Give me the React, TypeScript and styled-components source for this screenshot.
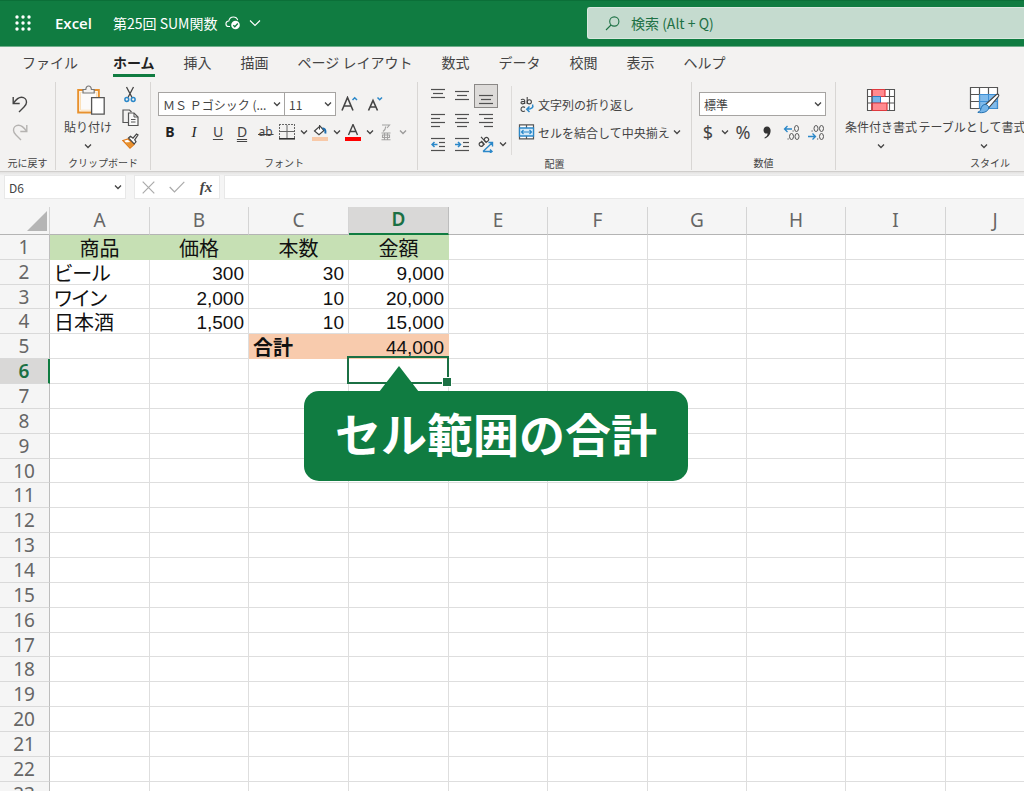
import React from 'react';
import styled, { createGlobalStyle, css } from 'styled-components';

const UI = `"Noto Sans CJK JP", "Noto Sans", sans-serif`;
const GREEN = '#107c41';

const GlobalStyle = createGlobalStyle`
  * { box-sizing: border-box; }
  body { margin: 0; font-family: ${UI}; color: #444; background: #fff; }
  button, input, select { font-family: inherit; color: inherit; margin: 0; }
  svg { display: block; flex: none; }
`;

const Page = styled.div`
  display: flex;
  flex-direction: column;
  height: 100vh;
  overflow: hidden;
`;

/* ---------- title bar ---------- */

const TitleBar = styled.header`
  display: grid;
  grid-template-columns: 587px 1fr;
  align-items: center;
  height: 47px;
  flex: none;
  padding-bottom: 1px;
  background: ${GREEN};
  border-top: 1px solid #0b6f38;
  border-bottom: 1px solid #6fae8b;
  color: #fff;
`;

const TitleLeft = styled.div`
  display: flex;
  align-items: center;
  padding-left: 12px;
`;

const PlainButton = styled.button`
  display: flex;
  align-items: center;
  justify-content: center;
  padding: 0;
  border: 0;
  background: none;
`;

const WaffleButton = styled(PlainButton)`
  width: 22px;
  height: 24px;
`;

const AppName = styled.a`
  margin-left: 21px;
  width: 58px;
  font: 600 15px/24px "Open Sans", sans-serif;
  color: #fff;
  text-decoration: none;
`;

const FileButton = styled(PlainButton)`
  gap: 8px;
  font-size: 14px;
  line-height: 24px;
`;

const SearchBox = styled.label`
  display: flex;
  align-items: center;
  gap: 11px;
  height: 32px;
  padding-left: 17px;
  background: #c5dbcf;
  border: 1px solid #d9e8df;
  border-right: 0;
  border-radius: 3px 0 0 3px;
  color: #1e7145;
`;

const SearchInput = styled.input`
  flex: 1;
  min-width: 0;
  padding: 0;
  border: 0;
  outline: 0;
  background: none;
  font-size: 14px;
  &::placeholder { color: #1e7145; opacity: 1; }
`;

/* ---------- ribbon ---------- */

const Tabs = styled.nav`
  display: flex;
  gap: 29px;
  height: 34px;
  flex: none;
  padding: 3px 0 0 22px;
  background: #f3f2f1;
`;

const Tab = styled.a<{ $active?: boolean; $wide?: boolean }>`
  height: 27px;
  font-size: 14px;
  line-height: 24px;
  color: #444;
  white-space: nowrap;
  text-decoration: none;
  ${p => p.$wide && css`margin-right: 6px;`}
  ${p => p.$active && css`
    font-weight: 700;
    color: #222;
    border-bottom: 3px solid ${GREEN};
  `}
`;

const Ribbon = styled.section`
  display: flex;
  height: 90px;
  flex: none;
  padding: 1px 0;
  background: #f3f2f1;
  overflow: hidden;
`;

const Group = styled.div<{ $width: number }>`
  display: flex;
  flex-direction: column;
  flex: none;
  width: ${p => p.$width}px;
  border-right: 1px solid #d8d6d4;
`;

const GroupBody = styled.div<{ $left?: number }>`
  display: flex;
  height: 74px;
  padding-left: ${p => p.$left ?? 8}px;
`;

const GroupLabel = styled.div`
  font-size: 10px;
  line-height: 15px;
  text-align: center;
  color: #444;
`;

const Rows = styled.div`
  display: flex;
  flex-direction: column;
  padding-top: 8px;
`;

const Row = styled.div`
  display: flex;
  align-items: center;
  height: 28px;
`;

const Tool = styled(PlainButton)<{ $width?: number; $on?: boolean }>`
  width: ${p => p.$width ?? 24}px;
  height: 24px;
  font: 400 14px/20px "Noto Sans", sans-serif;
  ${p => p.$on && css`
    background: #dddbd9;
    border: 1px solid #8a8886;
  `}
`;

const Glyph = styled.span<{ $kind: 'bold' | 'italic' | 'under' | 'double' | 'strike' }>`
  font: 400 14px/18px "Noto Sans", sans-serif;
  ${p => p.$kind === 'bold' && css`font-weight: 700; color: #222;`}
  ${p => p.$kind === 'italic' && css`font: italic 400 15px/18px "Liberation Serif", serif; color: #222;`}
  ${p => p.$kind === 'under' && css`text-decoration: underline; text-underline-offset: 2px;`}
  ${p => p.$kind === 'double' && css`text-decoration: underline double; text-underline-offset: 2px;`}
  ${p => p.$kind === 'strike' && css`
    padding-right: 1px;
    font-size: 12px;
    background: linear-gradient(#444, #444) center 11px / 100% 1px no-repeat;
  `}
`;

const Split = styled(PlainButton)<{ $faded?: boolean }>`
  display: grid;
  grid-template-columns: 18px 15px;
  justify-items: center;
  height: 24px;
  opacity: ${p => (p.$faded ? 0.5 : 1)};
`;

const Symbol = styled.span`
  font: 400 18px/22px "Noto Sans", sans-serif;
`;

const BigButton = styled(PlainButton)<{ $width: number }>`
  flex-direction: column;
  justify-content: flex-start;
  flex: none;
  width: ${p => p.$width}px;
  font-size: 12px;
  line-height: 20px;
  white-space: nowrap;
`;

const BigIcon = styled.span`
  display: flex;
  align-items: center;
  height: 35px;
`;

const ChevronSlot = styled.span`
  display: flex;
  align-items: center;
  height: 18px;
`;

const SmallStack = styled.div`
  display: flex;
  flex-direction: column;
  padding: 1px 0 0 4px;
`;

const SmallTool = styled(PlainButton)`
  width: 24px;
  height: 23px;
`;

const SelectWrap = styled.label<{ $width: number }>`
  position: relative;
  display: flex;
  align-items: center;
  width: ${p => p.$width}px;
  height: 24px;
  background: #fff;
  border: 1px solid #a6a4a2;
  & + & { border-left: 0; }
  & > svg { position: absolute; right: 3px; pointer-events: none; }
`;

const Select = styled.select`
  appearance: none;
  width: 100%;
  height: 100%;
  padding: 0 0 0 4px;
  border: 0;
  outline: 0;
  background: none;
  font-size: 12px;
`;

const AlignGrid = styled.div`
  display: grid;
  grid-template-columns: 24px 24px 24px 13px;
  grid-auto-rows: 24px;
  padding-top: 2px;
`;

const Orientation = styled(PlainButton)`
  grid-column: span 2;
  gap: 3px;
  justify-content: flex-start;
  padding-left: 3px;
`;

const Spacer = styled.span``;

const WrapTools = styled(Rows)`
  position: relative;
  padding-left: 7px;
  &::before {
    content: "";
    position: absolute;
    left: 0;
    top: 4px;
    bottom: 1px;
    border-left: 1px solid #dddbd9;
  }
`;

const LineTool = styled(PlainButton)`
  gap: 3px;
  height: 28px;
  justify-content: flex-start;
  font-size: 12px;
  white-space: nowrap;
`;

/* ---------- formula bar ---------- */

const FormulaBar = styled.div`
  display: flex;
  height: 36px;
  flex: none;
  padding: 3px 0 8px 4px;
  border-top: 1px solid #d0cecc;
  background: linear-gradient(#e2e1e0, #f5f5f5 4px);
`;

const NameBox = styled.label`
  position: relative;
  display: flex;
  align-items: center;
  width: 122px;
  margin-right: 8px;
  background: #fff;
  border: 1px solid #e8e8e8;
  & > svg { position: absolute; right: 3px; }
`;

const NameInput = styled.input`
  width: 100%;
  padding: 0 0 0 4px;
  border: 0;
  outline: 0;
  background: none;
  font-size: 12px;
`;

const FormulaTools = styled.div`
  display: flex;
  align-items: center;
  width: 86px;
  margin-right: 4px;
  background: #fff;
  border: 1px solid #e8e8e8;
`;

const Fx = styled.span`
  font: italic 700 15px/20px "Liberation Serif", serif;
`;

const FormulaInput = styled.input`
  flex: 1;
  min-width: 0;
  padding: 0 6px;
  border: 1px solid #e8e8e8;
  border-right: 0;
  outline: 0;
  background: #fff;
  font-size: 12px;
`;

/* ---------- sheet ---------- */

const Sheet = styled.main`
  position: relative;
  flex: 1;
  min-height: 0;
  overflow: hidden;
  background: linear-gradient(#f5f5f5 28px, #fff 28px);
`;

const Grid = styled.table`
  table-layout: fixed;
  width: 1045px;
  border-collapse: separate;
  border-spacing: 0;
`;

const SheetRow = styled.tr<{ $height: number }>`
  height: ${p => p.$height}px;
`;

const ColHead = styled.th<{ $active?: boolean }>`
  height: 28px;
  padding: 0 0 2px;
  font: 400 19px/24px "Noto Sans", sans-serif;
  color: #666;
  background: #f5f5f5;
  border-right: 1px solid #d4d4d4;
  border-bottom: 1px solid #b4b4b4;
  ${p => p.$active && css`
    font-weight: 600;
    color: #1b7044;
    background: #d9d8d7;
    border-right-color: #bdbdbd;
    border-bottom: 2px solid ${GREEN};
  `}
`;

const Corner = styled.td`
  padding: 0 2px 3px 0;
  background: #f5f5f5;
  border-right: 1px solid #d4d4d4;
  border-bottom: 1px solid #b4b4b4;
  vertical-align: bottom;
  & > svg { margin-left: auto; }
`;

const RowHead = styled.th<{ $active?: boolean }>`
  padding: 0 1px 0 0;
  font: 400 19px/20px "Noto Sans", sans-serif;
  color: #666;
  background: #f5f5f5;
  border-right: 1px solid #bdbdbd;
  border-bottom: 1px solid #d9d9d9;
  ${p => p.$active && css`
    padding: 0;
    font-weight: 600;
    color: #1b7044;
    background: #d9d8d7;
    border-right: 2px solid ${GREEN};
  `}
`;

type Align = 'left' | 'center' | 'right';

const Cell = styled.td<{ $align?: Align; $fill?: string; $bold?: boolean }>`
  position: relative;
  padding: 4px 4px 0 4px;
  font: 400 19px/18px "Liberation Sans", "Noto Sans CJK JP", sans-serif;
  font-size: ${p => (p.$align === 'right' ? 19 : 20)}px;
  font-weight: ${p => (p.$bold ? 700 : 400)};
  color: #111;
  text-align: ${p => p.$align ?? 'left'};
  font-feature-settings: ${p => (p.$align ? 'normal' : '"palt"')};
  white-space: nowrap;
  background: ${p => p.$fill ?? '#fff'};
  border-right: 1px solid ${p => p.$fill ?? '#dedede'};
  border-bottom: 1px solid ${p => p.$fill ?? '#dedede'};
`;

const Selection = styled.div`
  position: absolute;
  z-index: 1;
  inset: -3px -1px -1px -2px;
  border: 2px solid #1b7044;
  &::after {
    content: "";
    position: absolute;
    right: -5px;
    bottom: -5px;
    width: 8px;
    height: 8px;
    background: #1b7044;
    border: 1px solid #fff;
  }
`;

const Callout = styled.div`
  position: absolute;
  z-index: 2;
  top: 184px;
  left: 304px;
  padding: 0 31px 8px;
  border-radius: 15px;
  background: ${GREEN};
  color: #fff;
  font-size: 46px;
  font-weight: 700;
  line-height: 82px;
  white-space: nowrap;
  &::before {
    content: "";
    position: absolute;
    left: 75px;
    top: -25px;
    border: 20px solid transparent;
    border-top: 0;
    border-bottom: 26px solid ${GREEN};
  }
`;

/* ---------- icons ---------- */

const Chevron = ({ size = 6, color = '#444', width = 1.3 }: { size?: number; color?: string; width?: number }) => (
  <svg width={size + 2} height={size} viewBox={`0 0 ${size + 2} ${size}`} fill="none" stroke={color} strokeWidth={width}>
    <path d={`M1 ${size / 4}L${size / 2 + 1} ${size * 0.75}L${size + 1} ${size / 4}`} />
  </svg>
);

const WaffleIcon = () => (
  <svg width="18" height="18" viewBox="0 0 18 18" fill="#fff">
    {[3, 9, 15].map(y => [3, 9, 15].map(x => <circle key={`${x}-${y}`} cx={x} cy={y} r="1.7" />))}
  </svg>
);

const CloudIcon = () => (
  <svg width="16" height="14" viewBox="0 0 16 14" fill="none" stroke="#fff" strokeWidth="1.1">
    <path d="M5 10.5H3.6A2.7 2.7 0 0 1 3.8 5C4.300 2.600 6.200 1 8.400 1s3.700 1.200 4.300 3.100" />
    <circle cx="10.500" cy="9" r="4.300" fill="#fff" stroke="none" />
    <path d="M8.300 9.300l1.500 1.500 3-3.300" stroke={GREEN} strokeWidth="1.300" />
  </svg>
);

const SearchIcon = () => (
  <svg width="15" height="15" viewBox="0 0 15 15" fill="none" stroke="#1e7145" strokeWidth="1.1">
    <circle cx="9.300" cy="5.500" r="4.600" />
    <path d="M6 9L1 14" />
  </svg>
);

const UndoIcon = ({ flip }: { flip?: boolean }) => (
  <svg width="16" height="18" viewBox="0 0 16 18" fill="none" stroke={flip ? '#b5b3b1' : '#444'} strokeWidth="1.4">
    <g transform={flip ? 'matrix(-1 0 0 1 16 0)' : undefined}>
      <path d="M1.200 2v6.500h6.500" />
      <path d="M1.500 8.200C4 4.500 6.500 2.300 9.500 2.300c3 0 5 2.200 5 4.900 0 2-1 3.300-2.500 4.800L7 17" />
    </g>
  </svg>
);

const PasteIcon = () => (
  <svg width="34" height="30" viewBox="-6 0 34 30" fill="none">
    <path d="M1.200 5h20.600v22.500H1.200z" fill="#fff" stroke="#e8912d" strokeWidth="2" />
    <path d="M3.500 7.200h16v18h-16z" fill="#fbfaf9" stroke="#fbe0b8" strokeWidth="1" />
    <path d="M6 8V4.500h2.800C9 2.200 10 1 11.600 1s2.600 1.200 2.800 3.500h2.800V8z" fill="#f3f2f1" stroke="#777" strokeWidth="1.200" />
    <path d="M14.600 12.600h12.600v16.600H14.600z" fill="#fff" stroke="#555" strokeWidth="1.300" />
  </svg>
);

const CutIcon = () => (
  <svg width="12" height="17" viewBox="0 0 12 17" fill="none">
    <path d="M2.500 1l5.800 11M9.500 1L3.700 12" stroke="#444" strokeWidth="1.300" />
    <circle cx="2.800" cy="13.500" r="1.900" stroke="#2b88c9" strokeWidth="1.500" />
    <circle cx="9.200" cy="13.500" r="1.900" stroke="#2b88c9" strokeWidth="1.500" />
  </svg>
);

const CopyIcon = () => (
  <svg width="17" height="17" viewBox="0 0 17 17" fill="none" stroke="#555" strokeWidth="1.200">
    <path d="M6 13.500H1V1h6.500l2 2" />
    <path d="M6.500 4h5.500l4 4v8.500H6.500z" fill="#f8f8f8" />
    <path d="M12 4v4h4M9 10.500h4.500M9 13h4.500" strokeWidth="1" />
  </svg>
);

const PainterIcon = () => (
  <svg width="17" height="16" viewBox="0 0 17 16">
    <path d="M1 7.500l5-1.500 6 5.500-4 3.500z" fill="#fff" stroke="#e07b1a" strokeWidth="1.300" />
    <path d="M3 9.500l6-.5 2.500 2.500-3.500 3z" fill="#e8912d" />
    <path d="M6.500 5l2-1.800 2.500 2L14.500 1l1.500 1-3.300 4.800 1.300 2-1.800 2z" fill="#fff" stroke="#444" strokeWidth="1.200" />
  </svg>
);

const FontSizeIcon = ({ up }: { up?: boolean }) => (
  <svg width="18" height="17" viewBox="0 0 18 17" fill="none">
    {up
      ? <path d="M1 14.500L6.500 1.500 12 14.500M3 10h7" stroke="#444" strokeWidth="1.600" />
      : <path d="M1.500 14.500L6 4.500 10.500 14.500M3 11h6" stroke="#444" strokeWidth="1.600" />}
    <path d={up ? 'M11.500 4L13.700 1.800 16 4' : 'M10.500 1.500l2.200 2.200L15 1.500'} stroke="#2b88c9" strokeWidth="1.500" />
  </svg>
);

const BorderIcon = () => (
  <svg width="16" height="16" viewBox="0 0 16 16" fill="none" stroke="#666">
    <path d="M.5 0v14M15.500 0v14M0 .5h16" strokeWidth="1" strokeDasharray="2 1" />
    <path d="M8 1v13M1 7.500h14" strokeWidth="1" />
    <path d="M0 14.800h16" stroke="#333" strokeWidth="1.600" />
  </svg>
);

const FillIcon = () => (
  <svg width="16" height="17" viewBox="0 0 16 17" fill="none">
    <path d="M2.500 7L8 2l4 4.500-5 4.300z" fill="#fff" stroke="#444" strokeWidth="1.200" />
    <path d="M7.500 1v4.500" stroke="#444" />
    <path d="M10.500 4.500C12.500 4 14 6 13.300 9.500" stroke="#1f6fb0" strokeWidth="2" />
    <path d="M0 13h16v4H0z" fill="#f8c9a8" />
  </svg>
);

const FontColorIcon = () => (
  <svg width="16" height="17" viewBox="0 0 16 17" fill="none">
    <path d="M3.500 11L8 .5l4.500 10.500M5.200 7.500h5.600" stroke="#444" strokeWidth="1.400" />
    <path d="M0 13h16v4H0z" fill="#f00" />
  </svg>
);

const PhoneticIcon = () => (
  <svg width="10" height="17" viewBox="0 0 10 17" fill="none" stroke="#555" strokeWidth="1.100">
    <path d="M1 1h7.500L6 4M4.700 2.500c0 2.500-.5 3.500-2.700 5M.5 9h9M.5 15.800h9M3.500 9v6.500M6.500 9v6.500M1.500 11h7v2.500h-7z" />
  </svg>
);

const LINES: Record<string, [number, number, number][]> = {
  top: [[0, 14, 1], [2, 12, 5], [0, 14, 9]],
  middle: [[0, 14, 3], [2, 12, 7], [0, 14, 11]],
  bottom: [[0, 14, 7], [2, 12, 11], [0, 14, 15]],
  left: [[0, 14, 2], [0, 9, 6], [0, 14, 10], [0, 9, 14]],
  center: [[0, 14, 2], [2, 12, 6], [0, 14, 10], [2, 12, 14]],
  right: [[0, 14, 2], [5, 14, 6], [0, 14, 10], [5, 14, 14]],
  outdent: [[0, 14, 2], [8, 14, 6], [8, 14, 10], [0, 14, 14]],
  indent: [[0, 14, 2], [8, 14, 6], [8, 14, 10], [0, 14, 14]],
};

const LinesIcon = ({ kind }: { kind: string }) => (
  <svg width="14" height="17" viewBox="0 0 14 17" fill="none">
    {LINES[kind].map(([a, b, y]) => <path key={y} d={`M${a} ${y + 0.5}H${b}`} stroke="#505050" strokeWidth="1.200" />)}
    {kind === 'outdent' && <path d="M6.500 8.500H1M3.500 6L1 8.500 3.500 11" stroke="#2b88c9" strokeWidth="1.500" />}
    {kind === 'indent' && <path d="M0 8.500h5.500M3 6l2.500 2.500L3 11" stroke="#2b88c9" strokeWidth="1.500" />}
  </svg>
);

const OrientationIcon = () => (
  <svg width="19" height="17" viewBox="0 0 19 17" fill="none">
    <g stroke="#444" strokeWidth="1.200" transform="rotate(-42 6 6)">
      <circle cx="3.200" cy="6.500" r="2.100" />
      <path d="M5.500 4v5M8 .8V9" />
      <circle cx="10.200" cy="6.500" r="2.100" />
    </g>
    <path d="M6 15.500L15.500 6.500M11.500 6.500h4v4M6 15.500h9M13 13.500l2 2-2 1.500" stroke="#2b88c9" strokeWidth="1.400" />
  </svg>
);

const WrapIcon = () => (
  <svg width="17" height="17" viewBox="0 0 17 17" fill="none">
    <g stroke="#444" strokeWidth="1.100">
      <path d="M3 3.800c1-1 3.700-.8 3.700 1V8M6.700 5.500C4.500 5.300 3 5.600 3 6.800c0 1.500 3 1.400 3.700-.3" />
      <path d="M9.200 1v7" />
      <circle cx="11.300" cy="5.800" r="2.100" />
      <path d="M7 11.500c-1.500-1.100-4-.6-4 1.700s2.500 2.800 4 1.700" />
    </g>
    <path d="M14.500 8.500c1 2.500 0 4.800-5.500 4.800M11.500 10.500L8.800 13.300l2.700 2.700" stroke="#2b88c9" strokeWidth="1.500" />
  </svg>
);

const MergeIcon = () => (
  <svg width="17" height="16" viewBox="0 0 17 16" fill="none">
    <path d="M1.500.8h14v14h-14zM8.500 1v3M8.500 12v3" stroke="#555" strokeWidth="1.200" fill="#fff" />
    <path d="M1.500 4h14v8h-14z" fill="#d5eaf8" stroke="#2b88c9" strokeWidth="1.300" />
    <path d="M3.500 8h10M5.500 6l-2 2 2 2M11.500 6l2 2-2 2" stroke="#2b88c9" strokeWidth="1.200" />
  </svg>
);

const DecimalIcon = ({ more }: { more?: boolean }) => (
  <svg width="18" height="17" viewBox="0 0 18 17" fill="none">
    <g stroke="#555">
      {more ? (
        <>
          <ellipse cx="13.500" cy="4.500" rx="2" ry="3" />
          <ellipse cx="8.500" cy="12.500" rx="2" ry="3" />
          <ellipse cx="14" cy="12.500" rx="2" ry="3" />
          <path d="M4.500 15h1.200M9.500 7h1.200" />
        </>
      ) : (
        <>
          <ellipse cx="9" cy="4.500" rx="2" ry="3" />
          <ellipse cx="14.500" cy="4.500" rx="2" ry="3" />
          <ellipse cx="14.500" cy="12.500" rx="2" ry="3" />
          <path d="M4.500 7h1.200M10 15h1.200" />
        </>
      )}
    </g>
    <path
      d={more ? 'M9 5H1.500M4.500 2l-3 3 3 3' : 'M1 12.500h7.500M5.500 9.500l3 3-3 3'}
      stroke="#2b88c9"
      strokeWidth="1.300"
    />
  </svg>
);

const CommaIcon = () => (
  <svg width="8" height="13" viewBox="0 0 8 13">
    <path d="M4 .5c2.200 0 3.600 1.700 3.600 4 0 3.800-2.300 7-5.800 8l-.4-.8c2-1 3.200-2.400 3.200-4.200C2.200 8 .5 6.500.5 4.200.5 2 2 .5 4 .5z" fill="#333" />
  </svg>
);

const ConditionalIcon = () => (
  <svg width="30" height="24" viewBox="0 0 30 24" fill="none">
    <path d="M1.500 1.500h27v21h-27z" fill="#fff" />
    <path d="M6 1.500h13v7H6z" fill="#ff8a8f" stroke="#e0393e" strokeWidth="1.200" />
    <path d="M6 8.500h8.500v6.500H6z" fill="#74b4e8" stroke="#2b7cc4" />
    <path d="M6 15h15v7.500H6z" fill="#ff8a8f" stroke="#e0393e" strokeWidth="1.200" />
    <path d="M1.500 1.500h27v21h-27zM1.500 8.500H6M1.500 15H6M19 8.500h9.500M21 15h7.500M6 1.500v21M23.500 1.500v21" stroke="#555" strokeWidth="1.100" />
    <path d="M6 1.500h13M6 22.500h15M6 1.500v7M6 15v7.500" stroke="#e0393e" strokeWidth="1.200" />
  </svg>
);

const TableFormatIcon = () => (
  <svg width="32" height="28" viewBox="0 0 32 28" fill="none">
    <path d="M2.500 1.500h27v21h-27z" fill="#fff" />
    <path d="M11.500 8.500h18v14h-18z" fill="#80bbec" />
    <path d="M2.500 1.500h27v21h-27zM2.500 8.500h27M2.500 15.500h9M11.500 1.500v21M20.500 1.500v7" stroke="#555" strokeWidth="1.200" />
    <path d="M11.500 15.500h18M20.500 8.500v14M11.500 8.500h18v14h-18z" stroke="#3d8fd4" />
    <path d="M17 19L28.500 8.500c1.500-1 3 .2 2 1.800L20.500 22z" fill="#fff" stroke="#444" strokeWidth="1.100" />
    <path d="M17.500 18.500c2 .3 3.300 1.700 3.300 3.500-.8 4-6.300 5.500-11 4.300 3-1 2.600-2.600 3.600-5 .7-1.700 2.300-3 4.100-2.800z" fill="#74b4e8" stroke="#1f6fb0" />
  </svg>
);

const CancelIcon = () => (
  <svg width="13" height="13" viewBox="0 0 13 13" stroke="#aaa" strokeWidth="1.200"><path d="M.7.7l11.600 11.600M12.300.7L.7 12.300" /></svg>
);

const CheckIcon = () => (
  <svg width="16" height="12" viewBox="0 0 16 12" fill="none" stroke="#aaa" strokeWidth="1.200"><path d="M.7 6l4.800 5L15.300.8" /></svg>
);

/* ---------- data ---------- */

const TABS = ['ファイル', 'ホーム', '挿入', '描画', 'ページ レイアウト', '数式', 'データ', '校閲', '表示', 'ヘルプ'];

const COLUMNS: [string, number][] = [
  ['A', 100], ['B', 99], ['C', 100], ['D', 100], ['E', 99],
  ['F', 100], ['G', 99], ['H', 99], ['I', 100], ['J', 99],
];

const ROW_COUNT = 23;
const SHORT_ROWS = [3, 10, 17];
const HEAD_FILL = '#c6e0b4';
const TOTAL_FILL = '#f8cbad';

type CellData = { text: string; align?: Align; fill?: string; bold?: boolean };

const heading = (text: string): CellData => ({ text, align: 'center', fill: HEAD_FILL });
const num = (text: string): CellData => ({ text, align: 'right' });

const CELLS: Record<string, CellData> = {
  A1: heading('商品'), B1: heading('価格'), C1: heading('本数'), D1: heading('金額'),
  A2: { text: 'ビール' }, B2: num('300'), C2: num('30'), D2: num('9,000'),
  A3: { text: 'ワイン' }, B3: num('2,000'), C3: num('10'), D3: num('20,000'),
  A4: { text: '日本酒' }, B4: num('1,500'), C4: num('10'), D4: num('15,000'),
  C5: { text: '合計', fill: TOTAL_FILL, bold: true },
  D5: { text: '44,000', align: 'right', fill: TOTAL_FILL },
};

const SpreadsheetGrid = () => (
  <Grid>
    <colgroup>
      <col width={50} />
      {COLUMNS.map(([name, width]) => <col key={name} width={width} />)}
    </colgroup>
    <thead>
      <tr>
        <Corner>
          <svg width="20" height="20" viewBox="0 0 20 20"><path d="M20 0v20H0z" fill="#b5b5b5" /></svg>
        </Corner>
        {COLUMNS.map(([name]) => <ColHead key={name} scope="col" $active={name === 'D'}>{name}</ColHead>)}
      </tr>
    </thead>
    <tbody>
      {Array.from({ length: ROW_COUNT }, (_, i) => i + 1).map(row => (
        <SheetRow key={row} $height={SHORT_ROWS.includes(row) ? 24 : 25}>
          <RowHead scope="row" $active={row === 6}>{row}</RowHead>
          {COLUMNS.map(([col]) => {
            const cell = CELLS[col + row];
            return (
              <Cell key={col} $align={cell?.align} $fill={cell?.fill} $bold={cell?.bold}>
                {cell?.text}
                {col === 'D' && row === 6 && <Selection />}
              </Cell>
            );
          })}
        </SheetRow>
      ))}
    </tbody>
  </Grid>
);

export default function App() {
  return (
    <Page>
      <GlobalStyle />
      <TitleBar>
        <TitleLeft>
          <WaffleButton aria-label="アプリ起動ツール"><WaffleIcon /></WaffleButton>
          <AppName href="#">Excel</AppName>
          <FileButton>第25回 SUM関数<CloudIcon /><Chevron size={10} color="#fff" width={1.1} /></FileButton>
        </TitleLeft>
        <SearchBox>
          <SearchIcon />
          <SearchInput type="text" aria-label="検索" placeholder="検索 (Alt + Q)" />
        </SearchBox>
      </TitleBar>

      <Tabs>
        {TABS.map((name, i) => <Tab key={name} href="#" $wide={i === 0} $active={i === 1}>{name}</Tab>)}
      </Tabs>

      <Ribbon>
        <Group $width={56}>
          <GroupBody>
            <Rows>
              <Row><Tool aria-label="元に戻す"><UndoIcon /></Tool></Row>
              <Row><Tool aria-label="やり直し"><UndoIcon flip /></Tool></Row>
            </Rows>
          </GroupBody>
          <GroupLabel>元に戻す</GroupLabel>
        </Group>

        <Group $width={95}>
          <GroupBody $left={6}>
            <BigButton $width={52}>
              <BigIcon><PasteIcon /></BigIcon>
              貼り付け
              <ChevronSlot><Chevron /></ChevronSlot>
            </BigButton>
            <SmallStack>
              <SmallTool aria-label="切り取り"><CutIcon /></SmallTool>
              <SmallTool aria-label="コピー"><CopyIcon /></SmallTool>
              <SmallTool aria-label="書式のコピー"><PainterIcon /></SmallTool>
            </SmallStack>
          </GroupBody>
          <GroupLabel>クリップボード</GroupLabel>
        </Group>

        <Group $width={267}>
          <GroupBody $left={7}>
            <Rows>
              <Row>
                <SelectWrap $width={127}>
                  <Select aria-label="フォント名"><option>ＭＳ Ｐゴシック (...</option></Select>
                  <Chevron />
                </SelectWrap>
                <SelectWrap $width={51}>
                  <Select aria-label="フォント サイズ"><option>11</option></Select>
                  <Chevron />
                </SelectWrap>
                <Tool $width={28} aria-label="フォント サイズの拡大"><FontSizeIcon up /></Tool>
                <Tool aria-label="フォント サイズの縮小"><FontSizeIcon /></Tool>
              </Row>
              <Row>
                <Tool><Glyph $kind="bold">B</Glyph></Tool>
                <Tool><Glyph $kind="italic">I</Glyph></Tool>
                <Tool><Glyph $kind="under">U</Glyph></Tool>
                <Tool><Glyph $kind="double">D</Glyph></Tool>
                <Tool><Glyph $kind="strike">ab</Glyph></Tool>
                <Split aria-label="罫線"><BorderIcon /><Chevron /></Split>
                <Split aria-label="塗りつぶしの色"><FillIcon /><Chevron /></Split>
                <Split aria-label="フォントの色"><FontColorIcon /><Chevron /></Split>
                <Split $faded aria-label="ふりがな"><PhoneticIcon /><Chevron /></Split>
              </Row>
            </Rows>
          </GroupBody>
          <GroupLabel>フォント</GroupLabel>
        </Group>

        <Group $width={274}>
          <GroupBody>
            <AlignGrid>
              <Tool aria-label="上揃え"><LinesIcon kind="top" /></Tool>
              <Tool aria-label="上下中央揃え"><LinesIcon kind="middle" /></Tool>
              <Tool $on aria-label="下揃え"><LinesIcon kind="bottom" /></Tool>
              <Spacer />
              <Tool aria-label="左揃え"><LinesIcon kind="left" /></Tool>
              <Tool aria-label="中央揃え"><LinesIcon kind="center" /></Tool>
              <Tool aria-label="右揃え"><LinesIcon kind="right" /></Tool>
              <Spacer />
              <Tool aria-label="インデントを減らす"><LinesIcon kind="outdent" /></Tool>
              <Tool aria-label="インデントを増やす"><LinesIcon kind="indent" /></Tool>
              <Orientation aria-label="方向"><OrientationIcon /><Chevron /></Orientation>
            </AlignGrid>
            <WrapTools>
              <LineTool><WrapIcon />文字列の折り返し</LineTool>
              <LineTool><MergeIcon />セルを結合して中央揃え<Chevron /></LineTool>
            </WrapTools>
          </GroupBody>
          <GroupLabel>配置</GroupLabel>
        </Group>

        <Group $width={144}>
          <GroupBody $left={7}>
            <Rows>
              <Row>
                <SelectWrap $width={127}>
                  <Select aria-label="表示形式"><option>標準</option></Select>
                  <Chevron />
                </SelectWrap>
              </Row>
              <Row>
                <Split><Symbol>$</Symbol><Chevron /></Split>
                <Tool $width={22}><Symbol>%</Symbol></Tool>
                <Tool $width={26} aria-label="桁区切り"><CommaIcon /></Tool>
                <Tool aria-label="小数点以下の表示桁数を増やす"><DecimalIcon more /></Tool>
                <Tool aria-label="小数点以下の表示桁数を減らす"><DecimalIcon /></Tool>
              </Row>
            </Rows>
          </GroupBody>
          <GroupLabel>数値</GroupLabel>
        </Group>

        <Group $width={309}>
          <GroupBody $left={9}>
            <BigButton $width={72}>
              <BigIcon><ConditionalIcon /></BigIcon>
              条件付き書式
              <ChevronSlot><Chevron /></ChevronSlot>
            </BigButton>
            <BigButton $width={134}>
              <BigIcon><TableFormatIcon /></BigIcon>
              テーブルとして書式設定
              <ChevronSlot><Chevron /></ChevronSlot>
            </BigButton>
          </GroupBody>
          <GroupLabel>スタイル</GroupLabel>
        </Group>
      </Ribbon>

      <FormulaBar>
        <NameBox>
          <NameInput type="text" aria-label="名前ボックス" defaultValue="D6" />
          <Chevron />
        </NameBox>
        <FormulaTools>
          <Tool $width={26} aria-label="キャンセル"><CancelIcon /></Tool>
          <Tool $width={32} aria-label="入力"><CheckIcon /></Tool>
          <Tool $width={26}><Fx>fx</Fx></Tool>
        </FormulaTools>
        <FormulaInput type="text" aria-label="数式バー" />
      </FormulaBar>

      <Sheet>
        <SpreadsheetGrid />
        <Callout role="note">セル範囲の合計</Callout>
      </Sheet>
    </Page>
  );
}
